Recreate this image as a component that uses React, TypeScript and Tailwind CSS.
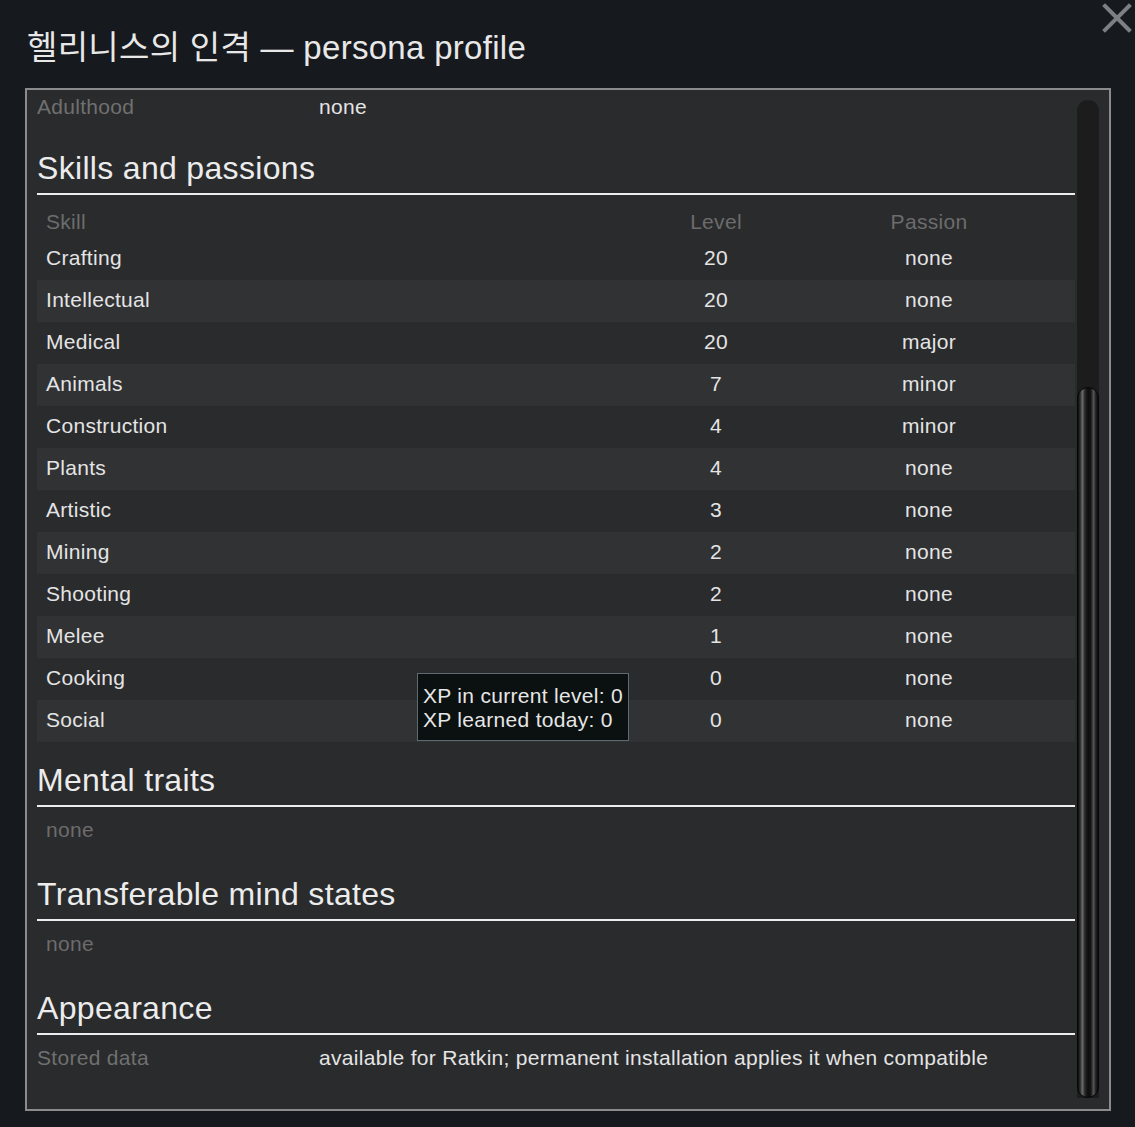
import React from "react";

type Skill = { name: string; level: number; passion: string };

const skills: Skill[] = [
  { name: "Crafting", level: 20, passion: "none" },
  { name: "Intellectual", level: 20, passion: "none" },
  { name: "Medical", level: 20, passion: "major" },
  { name: "Animals", level: 7, passion: "minor" },
  { name: "Construction", level: 4, passion: "minor" },
  { name: "Plants", level: 4, passion: "none" },
  { name: "Artistic", level: 3, passion: "none" },
  { name: "Mining", level: 2, passion: "none" },
  { name: "Shooting", level: 2, passion: "none" },
  { name: "Melee", level: 1, passion: "none" },
  { name: "Cooking", level: 0, passion: "none" },
  { name: "Social", level: 0, passion: "none" },
];

function SectionHeading({ title, className }: { title: string; className?: string }) {
  return (
    <div className={`border-b-2 border-[#ededed] pb-[7px] ${className ?? ""}`}>
      <h2 className="text-[32px] leading-[36px] text-[#ececec] tracking-[0.01em]">{title}</h2>
    </div>
  );
}

function Scrollbar() {
  return (
    <div className="mt-[10px] mb-[11px] ml-[2px] w-[22px] flex flex-col rounded-t-[11px] bg-[#1b1c1b]">
      <div className="h-[287px] shrink-0" />
      <div className="flex-1 rounded-[11px] border border-[#060606] bg-[linear-gradient(to_right,#0b0b0b_0%,#333333_12%,#6a6a6a_22%,#2a2a2a_34%,#0c0c0c_50%,#151515_64%,#555555_78%,#262626_88%,#090909_100%)]" />
    </div>
  );
}

export default function App() {
  return (
    <div className="relative w-[1135px] h-[1127px] overflow-hidden bg-[#16191e] font-['Liberation_Sans','Noto_Sans_CJK_KR',sans-serif] text-[#e4e4e4]">
      <h1 className="pl-[27px] pt-[28px] text-[33px] leading-[40px] tracking-[0.3px] text-[#e8e8e8]">
        헬리니스의 인격 — persona profile
      </h1>

      <button className="absolute right-[3px] top-[3px] w-[30px] h-[30px] flex items-center justify-center">
        <svg width="30" height="30" viewBox="0 0 30 30">
          <path d="M3 3 L27 27 M27 3 L3 27" stroke="#7c8085" strokeWidth="4" strokeLinecap="square" />
        </svg>
      </button>

      <div className="ml-[25px] mt-[20px] w-[1086px] h-[1023px] border-2 border-[#8b8b8b] bg-[#2a2b2d] flex overflow-hidden">
        <div className="w-[1048px] pl-[10px] pt-[5px] text-[21px] leading-[24px] tracking-[0.3px]">
          <div className="flex">
            <span className="w-[282px] text-[#707070]">Adulthood</span>
            <span>none</span>
          </div>

          <SectionHeading title="Skills and passions" className="mt-[31px]" />

          <div className="mt-[7px]">
            <div className="flex h-[36px] pt-[4px] items-center text-[#6c6c6c]">
              <span className="w-[579px] pl-[9px]">Skill</span>
              <span className="w-[200px] text-center">Level</span>
              <span className="ml-[13px] w-[200px] text-center">Passion</span>
            </div>
            {skills.map((s, i) => (
              <div
                key={s.name}
                className={`flex h-[42px] pb-[2px] items-center ${i % 2 === 1 ? "bg-[#313234]" : ""}`}
              >
                <span className="w-[579px] pl-[9px]">{s.name}</span>
                <span className="w-[200px] text-center">{s.level}</span>
                <span className="ml-[13px] w-[200px] text-center">{s.passion}</span>
              </div>
            ))}
          </div>

          <SectionHeading title="Mental traits" className="mt-[20px]" />
          <div className="mt-[11px] pl-[9px] text-[#6c6c6c]">none</div>

          <SectionHeading title="Transferable mind states" className="mt-[34px]" />
          <div className="mt-[11px] pl-[9px] text-[#6c6c6c]">none</div>

          <SectionHeading title="Appearance" className="mt-[34px]" />
          <div className="mt-[11px] flex">
            <span className="w-[282px] text-[#707070]">Stored data</span>
            <span>available for Ratkin; permanent installation applies it when compatible</span>
          </div>
        </div>
        <Scrollbar />
      </div>

      <div className="absolute left-[417px] top-[673px] w-[212px] h-[68px] border border-[#5d6a70] bg-[#0b1010] px-[5px] pt-[10px] text-[21px] leading-[24px] tracking-[0.3px] text-[#e6e6e6]">
        <div>XP in current level: 0</div>
        <div>XP learned today: 0</div>
      </div>
    </div>
  );
}
